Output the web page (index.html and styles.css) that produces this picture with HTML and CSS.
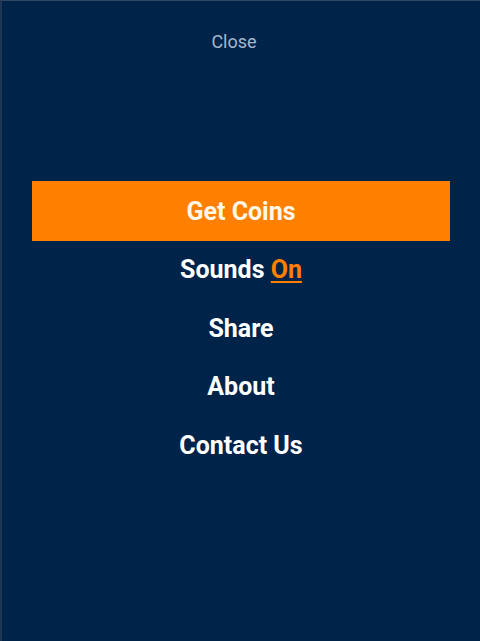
FILE: index.html
```html
<!DOCTYPE html>
<html>
<head>
<meta charset="utf-8">
<link rel="stylesheet" href="styles.css">
</head>
<body>
<div class="screen">
  <div class="close-row"><span class="close">Close</span></div>
  <nav class="menu">
    <div class="item item-primary">Get Coins</div>
    <div class="item">Sounds&nbsp;<span class="toggle">On</span></div>
    <div class="item">Share</div>
    <div class="item">About</div>
    <div class="item">Contact Us</div>
  </nav>
</div>
</body>
</html>
```
FILE: styles.css
```css
html, body {
  margin: 0;
  padding: 0;
  background: #00234a;
}
.screen {
  box-sizing: border-box;
  width: 480px;
  height: 641px;
  background: #00234a;
  border-top: 1px solid #36485f;
  border-left: 2px solid #1f3655;
  font-family: Roboto, "Noto Sans", sans-serif;
  display: flex;
  flex-direction: column;
}
.close-row {
  padding-top: 31px;
  padding-right: 14px;
  display: flex;
  justify-content: center;
}
.close {
  font-size: 18px;
  line-height: 20px;
  color: #a8b7cb;
}
.menu {
  margin-top: 129px;
  display: flex;
  flex-direction: column;
}
.item {
  height: 58.5px;
  display: flex;
  align-items: center;
  justify-content: center;
  font-size: 25px;
  font-weight: 700;
  color: #ffffff;
}
.item-primary {
  height: 60px;
  margin: 0 30px -0.5px 30px;
  background: #ff8000;
  color: #fff8ea;
}
.toggle {
  color: #ff8000;
  text-decoration: underline;
  text-underline-offset: 3px;
}
```
